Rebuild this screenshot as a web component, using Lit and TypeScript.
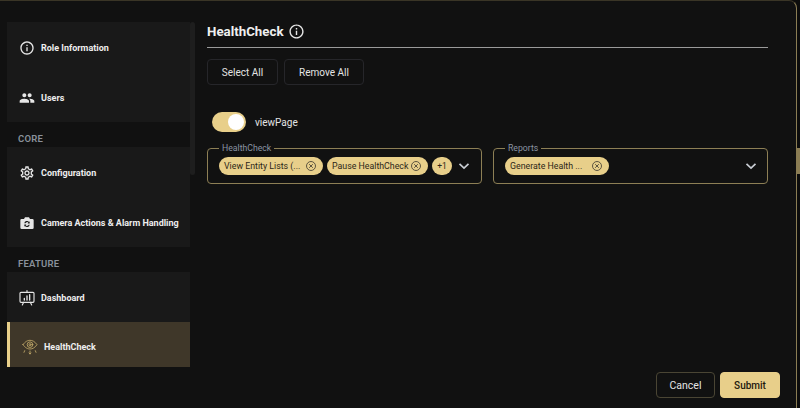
import { LitElement, html, css, svg } from "lit";
import { customElement } from "lit/decorators.js";

const infoPath = "M11 7h2v2h-2zm0 4h2v6h-2zm1-9C6.48 2 2 6.48 2 12s4.48 10 10 10 10-4.48 10-10S17.52 2 12 2zm0 18c-4.41 0-8-3.59-8-8s3.59-8 8-8 8 3.59 8 8-3.59 8-8 8z";
const icons: Record<string, unknown> = {
  info: svg`<path fill="currentColor" d=${infoPath}/>`,
  users: svg`<path fill="currentColor" d="M16 11c1.66 0 2.99-1.34 2.99-3S17.66 5 16 5c-1.66 0-3 1.34-3 3s1.34 3 3 3zm-8 0c1.66 0 2.99-1.34 2.99-3S9.66 5 8 5C6.34 5 5 6.34 5 8s1.34 3 3 3zm0 2c-2.33 0-7 1.17-7 3.5V19h14v-2.5c0-2.33-4.67-3.5-7-3.5zm8 0c-.29 0-.62.02-.97.05 1.16.84 1.97 1.97 1.97 3.45V19h6v-2.5c0-2.33-4.67-3.5-7-3.5z"/>`,
  gear: svg`<path fill="currentColor" d="M19.43 12.98c.04-.32.07-.64.07-.98 0-.34-.03-.66-.07-.98l2.11-1.65c.19-.15.24-.42.12-.64l-2-3.46c-.09-.16-.26-.25-.44-.25-.06 0-.12.01-.17.03l-2.49 1c-.52-.4-1.08-.73-1.69-.98l-.38-2.65C14.46 2.18 14.25 2 14 2h-4c-.25 0-.46.18-.49.42l-.38 2.65c-.61.25-1.17.59-1.69.98l-2.49-1c-.06-.02-.12-.03-.18-.03-.17 0-.34.09-.43.25l-2 3.46c-.13.22-.07.49.12.64l2.11 1.65c-.04.32-.07.65-.07.98 0 .33.03.66.07.98l-2.11 1.65c-.19.15-.24.42-.12.64l2 3.46c.09.16.26.25.44.25.06 0 .12-.01.17-.03l2.49-1c.52.4 1.08.73 1.69.98l.38 2.65c.03.24.24.42.49.42h4c.25 0 .46-.18.49-.42l.38-2.65c.61-.25 1.17-.59 1.69-.98l2.49 1c.06.02.12.03.18.03.17 0 .34-.09.43-.25l2-3.46c.12-.22.07-.49-.12-.64l-2.11-1.65zm-1.98-1.71c.04.31.05.52.05.73 0 .21-.02.43-.05.73l-.14 1.13.89.7 1.08.84-.7 1.21-1.27-.51-1.04-.42-.9.68c-.43.32-.84.56-1.25.73l-1.06.43-.16 1.13-.2 1.35h-1.4l-.19-1.35-.16-1.13-1.06-.43c-.43-.18-.83-.41-1.23-.71l-.91-.7-1.06.43-1.27.51-.7-1.21 1.08-.84.89-.7-.14-1.13c-.03-.31-.05-.54-.05-.74s.02-.43.05-.73l.14-1.13-.89-.7-1.08-.84.7-1.21 1.27.51 1.04.42.9-.68c.43-.32.84-.56 1.25-.73l1.06-.43.16-1.13.2-1.35h1.39l.19 1.35.16 1.13 1.06.43c.43.18.83.41 1.23.71l.91.7 1.06-.43 1.27-.51.7 1.21-1.07.85-.89.7.14 1.13zM12 8c-2.21 0-4 1.79-4 4s1.79 4 4 4 4-1.79 4-4-1.79-4-4-4zm0 6c-1.1 0-2-.9-2-2s.9-2 2-2 2 .9 2 2-.9 2-2 2z"/>`,
  camera: svg`<path fill="currentColor" fill-rule="evenodd" d="M4 6h3.500L9 3.500h6L16.500 6H20a2 2 0 0 1 2 2v11a2 2 0 0 1-2 2H4a2 2 0 0 1-2-2V8a2 2 0 0 1 2-2zm4 6.500h1.700a2.500 2.500 0 0 1 4.300-1l-1.200 1.200H16V9.500l-.9.900a4 4 0 0 0-7.100 2.100zm8 2h-1.700a2.500 2.500 0 0 1-4.300 1l1.200-1.200H8v3.200l.9-.9a4 4 0 0 0 7.100-2.100z"/>`,
  board: svg`<g fill="none" stroke="currentColor" stroke-width="1.700" stroke-linecap="round" stroke-linejoin="round"><path d="M12 1V3.500"/><rect x="1.500" y="3.500" width="21" height="15" rx="1.500"/><path d="M7 18.500l-2 4M17 18.500l2 4"/><path d="M8 15v-2.500M12 15V9M16 15V7" stroke-width="2"/></g>`,
  eye: svg`<g fill="none" stroke="currentColor" stroke-width="1.300" stroke-linecap="round" stroke-linejoin="round"><path d="M1.500 8.500C5 3.500 8.500 2 12 2s7 1.500 10.500 6.500C19 13.500 15.500 15 12 15s-7-1.500-10.500-6.500z"/><circle cx="12" cy="8.500" r="4.200"/><circle cx="12" cy="8.500" r="1.600"/><path d="M12 18v4.500M10.500 21l1.500 1.500 1.500-1.500M4 17.500l-1 2.500M20 17.500l1 2.500"/></g>`,
};
const icon = (n: string, cls = "ic") => html`<svg class=${cls} viewBox="0 0 24 24">${icons[n]}</svg>`;
const closeIcon = html`<svg class="x" viewBox="0 0 12 12"><g fill="none" stroke="#5d5540" stroke-width="1"><circle cx="6" cy="6" r="4.500"/><path d="M4.200 4.200l3.600 3.600M7.800 4.200l-3.600 3.600"/></g></svg>`;
const chevron = html`<svg class="chev" viewBox="0 0 12 12"><path d="M1.500 3.800L6 8l4.500-4.200" fill="none" stroke="#c9cdd4" stroke-width="1.700"/></svg>`;

@customElement("app-root")
export class AppRoot extends LitElement {
  static styles = css`
    :host { display: block; width: 800px; height: 408px; background: #0c0c0c; overflow: hidden; position: relative;
      font-family: Roboto, "Liberation Sans", sans-serif; color: #e8e8e8; }
    .modal { box-sizing: border-box; width: 797px; height: 408px; background: #111111; border-top: 1px solid #3a3526;
      border-right: 1px solid #8b7d54; border-top-right-radius: 8px; display: flex; }
    .handle { position: absolute; right: 0; top: 148px; width: 3px; height: 26px; background: #8b7d54; }
    .sidebar { width: 189px; box-sizing: border-box; padding: 21px 0 0 7px; position: relative; flex: none; }
    .thumb { position: absolute; left: 190px; top: 21px; width: 5px; height: 153px; background: #1e1e1e; border-radius: 3px; }
    .group { background: #191919; width: 183px; display: flex; flex-direction: column; }
    .item { height: 50px; display: flex; align-items: center; box-sizing: border-box; padding: 1px 0 0 12px; gap: 6px;
      font-size: 9px; font-weight: 700; color: #eeeeee; white-space: nowrap; }
    .item.active { height: 45px; background: #3f3729; border-left: 3px solid #e8cf8a; padding: 5px 0 0 12px; }
    .ic { width: 16px; height: 16px; flex: none; color: #e6e6e6; }
    .active .ic { color: #c0a868; width: 16px; height: 16px; }
    .label { height: 25px; box-sizing: border-box; padding: 11px 0 0 11px; font-size: 9.500px; font-weight: 600; line-height: 11px;
      letter-spacing: .2px; color: #8a919c; }
    .main { flex: 1; box-sizing: border-box; padding: 21px 28px 10px 18px; display: flex; flex-direction: column; min-width: 0; position: relative; }
    .title { display: flex; align-items: center; gap: 4px; height: 26px; box-sizing: border-box; padding: 0 0 7px; border-bottom: 1px solid #9a9a9a;
      width: 561px; font-size: 13.300px; font-weight: 700; color: #f0f0f0; }
    .title .ic { width: 17px; height: 17px; }
    .actions { display: flex; gap: 6px; margin-top: 11px; }
    .btn { box-sizing: border-box; height: 26px; display: flex; align-items: center; justify-content: center; border-radius: 4px;
      font-size: 10px; color: #e4e4e4; border: 1px solid #26262a; }
    .sel { width: 71px; } .rem { width: 80px; }
    .toggle-row { display: flex; align-items: center; gap: 9px; margin: 27px 0 0 5px; height: 20px; font-size: 10px; color: #e4e4e4; }
    .track { width: 34px; height: 20px; border-radius: 10px; background: #e8cf8a; display: flex; align-items: center; justify-content: flex-end; padding: 0 2px; box-sizing: border-box; }
    .knob { width: 16px; height: 16px; border-radius: 50%; background: #fff; }
    .fields { display: flex; gap: 11px; margin-top: 11px; width: 561px; }
    fieldset { box-sizing: border-box; flex: 1; width: 275px; min-width: 0; height: 41px; margin: 0; padding: 0 10px 0 11px; border: 1px solid #8d7f55; border-radius: 4px;
      display: flex; align-items: center; }
    legend { font-size: 8.700px; line-height: 11px; color: #8a94a3; padding: 0 3px; margin-left: 0; height: 11px; }
    .inner { display: flex; align-items: center; gap: 4px; width: 100%; margin-top: -5px; height: 20px; }
    .chip { box-sizing: border-box; height: 18px; border-radius: 9px; background: #e8cf8a; color: #2c2617; font-size: 8.800px; display: flex; align-items: center; justify-content: space-between;
      padding: 0 6px 0 5px; white-space: nowrap; flex: none; }
    .c1 { width: 104px; } .c2 { width: 101px; } .c3 { width: 104px; }
    .more { width: 20px; justify-content: center; padding: 0; font-size: 8.500px; }
    .x { width: 12px; height: 12px; flex: none; }
    .chev { width: 12px; height: 12px; flex: none; margin-left: 2px; }
    .push { margin-left: auto; }
    .footer { margin-top: auto; display: flex; justify-content: flex-end; gap: 5px; margin-right: -12px; }
    .cancel { width: 59px; border-color: #4a4534; font-size: 10.500px; }
    .submit { width: 60px; background: #e8cf8a; color: #1f1a0e; border-color: #e8cf8a; font-weight: 500; }
  `;

  render() {
    return html`
      <div class="modal">
        <aside class="sidebar">
          <div class="thumb"></div>
          <div class="group">
            <div class="item">${icon("info")}Role Information</div>
            <div class="item">${icon("users")}Users</div>
          </div>
          <div class="label">CORE</div>
          <div class="group">
            <div class="item">${icon("gear")}Configuration</div>
            <div class="item">${icon("camera")}Camera Actions &amp; Alarm Handling</div>
          </div>
          <div class="label">FEATURE</div>
          <div class="group">
            <div class="item">${icon("board")}Dashboard</div>
            <div class="item active">${icon("eye")}HealthCheck</div>
          </div>
        </aside>
        <main class="main">
          <div class="title">HealthCheck ${icon("info")}</div>
          <div class="actions">
            <div class="btn sel">Select All</div>
            <div class="btn rem">Remove All</div>
          </div>
          <div class="toggle-row"><div class="track"><div class="knob"></div></div>viewPage</div>
          <div class="fields">
            <fieldset>
              <legend>HealthCheck</legend>
              <div class="inner">
                <div class="chip c1">View Entity Lists (...${closeIcon}</div>
                <div class="chip c2">Pause HealthCheck${closeIcon}</div>
                <div class="chip more">+1</div>
                ${chevron}
              </div>
            </fieldset>
            <fieldset>
              <legend>Reports</legend>
              <div class="inner">
                <div class="chip c3">Generate Health ...${closeIcon}</div>
                <span class="push"></span>
                ${chevron}
              </div>
            </fieldset>
          </div>
          <div class="footer">
            <div class="btn cancel">Cancel</div>
            <div class="btn submit">Submit</div>
          </div>
        </main>
      </div>
      <div class="handle"></div>
    `;
  }
}
